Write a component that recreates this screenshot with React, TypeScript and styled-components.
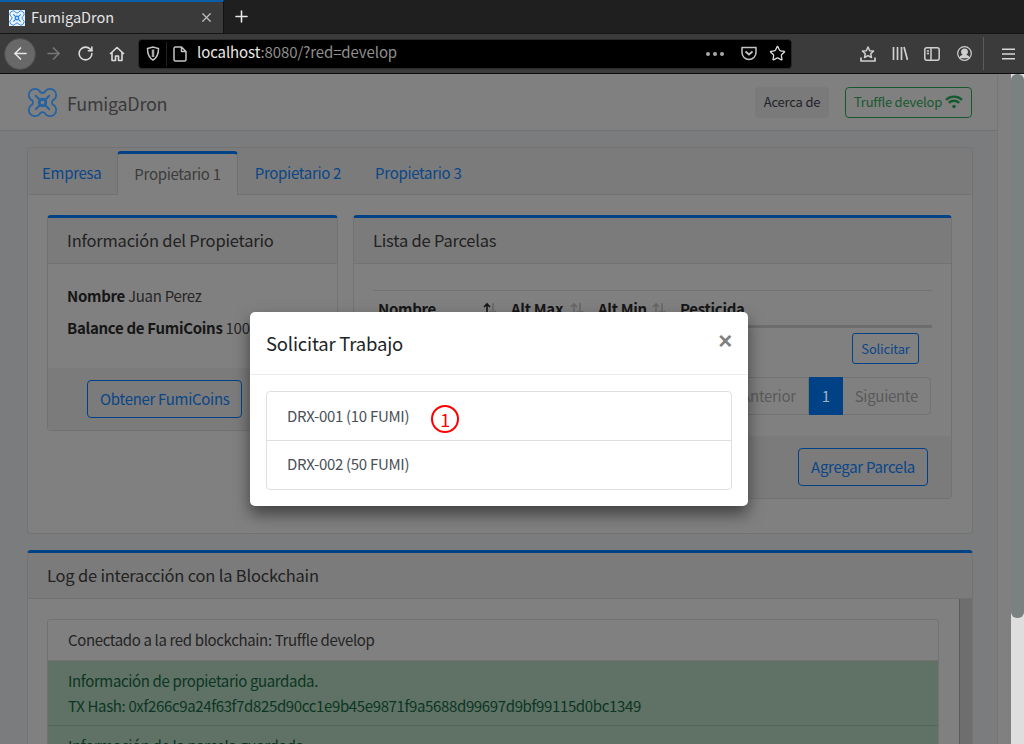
import styled, { createGlobalStyle } from "styled-components";
import { ArrowLeft, ArrowRight, RotateCw, X, Plus, Star } from "lucide-react";

// colours are written as they look under the modal backdrop
const BLUE = "#004285";
const LINK = "#0a4688";
const LINE = "#727272";
const CARD = "#808080";
const TINT = "#7b7b7b";
const GREEN = "#17592f";

const GlobalStyle = createGlobalStyle`
  html, body { margin: 0; padding: 0; height: 100%; overflow: hidden; }
  * { box-sizing: border-box; }
  body {
    font-family: "Noto Sans CJK SC", "Noto Sans", sans-serif;
    font-size: 15px;
    letter-spacing: -0.3px;
    line-height: 24px;
  }
`;

const DroneLogo = ({ size, color }: { size: number; color: string }) => (
  <svg width={size} height={size} viewBox="0 0 30 30" fill="none" stroke={color} strokeWidth="1.700">
    <path d="M12.500 12.500 8 8M17.500 12.500 22 8M12.500 17.500 8 22M17.500 17.500 22 22" strokeWidth="2" />
    <path d="M12 3.500A6 6 0 1 0 3.500 12C6.500 13 6.500 17 3.500 18A6 6 0 1 0 12 26.500C13 23.500 17 23.500 18 26.500A6 6 0 1 0 26.500 18C23.500 17 23.500 13 26.500 12A6 6 0 1 0 18 3.500C17 6.500 13 6.500 12 3.500Z" />
    <circle cx="15" cy="15" r="3.200" strokeWidth="2.800" />
  </svg>
);

const SortIcon = ({ active }: { active?: boolean }) => (
  <svg width="16" height="14" viewBox="0 0 16 14" fill="none" strokeWidth="1.600">
    <path d="M5 13V2M2 5l3-3 3 3" stroke={active ? "#151515" : "#666"} />
    <path d="M11 1v11M8 9l3 3 3-3" stroke="#666" />
  </svg>
);

const App = () => (
  <>
    <GlobalStyle />
    <Screen>
      <TabStrip>
        <BrowserTab>
          <Favicon>
            <DroneLogo size={16} color="#2a86e6" />
          </Favicon>
          <TabTitle>FumigaDron</TabTitle>
          <X size={15} color="#bdbdbd" strokeWidth={2} />
        </BrowserTab>
        <NewTab>
          <Plus size={19} color="#e6e6e6" strokeWidth={2} />
        </NewTab>
      </TabStrip>

      <Toolbar>
        <BackButton>
          <ArrowLeft size={19} color="#e8e8e8" strokeWidth={2} />
        </BackButton>
        <ToolButton>
          <ArrowRight size={19} color="#777" strokeWidth={2} />
        </ToolButton>
        <ToolButton>
          <RotateCw size={17} color="#dcdcdc" strokeWidth={2.200} />
        </ToolButton>
        <ToolButton>
          <svg width="16" height="16" viewBox="0 0 16 16" fill="none" stroke="#dcdcdc" strokeWidth="1.600">
            <path d="M1 8 8 1.500 15 8M3 6.500V14.500H6.500V10H9.500V14.500H13V6.500" strokeLinejoin="round" />
          </svg>
        </ToolButton>
        <UrlBar>
          <UrlIcon>
            <svg width="14" height="15" viewBox="0 0 14 15" fill="none" stroke="#c4c4c4" strokeWidth="1.500">
              <path d="M1.500 2.500 7 1l5.500 1.500c0 5-1 9-5.500 11.500C2.500 11.500 1.500 7.500 1.500 2.500Z" />
              <path d="M7 3.500V11" strokeWidth="2.500" stroke="#a8a8a8" />
            </svg>
          </UrlIcon>
          <UrlDivider />
          <UrlIcon>
            <svg width="14" height="16" viewBox="0 0 14 16" fill="none" stroke="#c4c4c4" strokeWidth="1.500">
              <path d="M1 2.500A1.500 1.500 0 0 1 2.500 1H8.500L13 5.500V13.500A1.500 1.500 0 0 1 11.500 15H2.500A1.500 1.500 0 0 1 1 13.500ZM8.500 1V5.500H13" strokeLinejoin="round" />
            </svg>
          </UrlIcon>
          <UrlText>
            <strong>localhost</strong>:8080/?red=develop
          </UrlText>
          <UrlActions>
            <UrlDots>
              <i />
              <i />
              <i />
            </UrlDots>
            <UrlAction>
              <svg width="16" height="15" viewBox="0 0 16 15" fill="none" stroke="#c4c4c4" strokeWidth="1.500">
                <path d="M1 1.500H15V6.500A7 7 0 0 1 1 6.500Z" strokeLinejoin="round" />
                <path d="M4.500 5.500 8 8.500 11.500 5.500" strokeWidth="1.800" />
              </svg>
            </UrlAction>
            <UrlAction>
              <Star size={17} color="#dcdcdc" strokeWidth={1.800} />
            </UrlAction>
          </UrlActions>
        </UrlBar>
        <RightIcons>
          <ToolButton>
            <svg width="16" height="16" viewBox="0 0 16 16" fill="none" stroke="#d0d0d0" strokeWidth="1.500">
              <path d="M8 1 9.700 4.700 13.500 5.100 10.700 7.700 11.500 11.500 8 9.600 4.500 11.500 5.300 7.700 2.500 5.100 6.300 4.700Z" strokeLinejoin="round" />
              <path d="M1 11.500V15H15V11.500" strokeWidth="1.700" />
            </svg>
          </ToolButton>
          <ToolButton>
            <svg width="16" height="15" viewBox="0 0 16 15" fill="none" stroke="#d0d0d0" strokeWidth="1.700">
              <path d="M1.500 1V14M5.500 1V14M9.500 1V14M12 1 15.500 14" />
            </svg>
          </ToolButton>
          <ToolButton>
            <svg width="16" height="14" viewBox="0 0 16 14" fill="none" stroke="#d0d0d0" strokeWidth="1.500">
              <rect x="0.800" y="0.800" width="14.400" height="12.400" rx="2" />
              <path d="M7 1V13M2.800 4H5M2.800 6.500H5" />
            </svg>
          </ToolButton>
          <ToolButton>
            <svg width="15" height="15" viewBox="0 0 15 15" fill="none" stroke="#d0d0d0" strokeWidth="1.200">
              <circle cx="7.500" cy="7.500" r="6.800" />
              <circle cx="7.500" cy="5.800" r="2.800" fill="#d0d0d0" />
              <path d="M2.800 12.200C3.500 9.800 5.500 9.300 7.500 9.300S11.500 9.800 12.200 12.200" fill="#d0d0d0" />
            </svg>
          </ToolButton>
          <ToolbarDivider />
          <ToolButton>
            <svg width="13" height="12" viewBox="0 0 13 12" stroke="#d8d8d8" strokeWidth="1.500">
              <path d="M0 1.200H13M0 6H13M0 10.800H13" />
            </svg>
          </ToolButton>
        </RightIcons>
      </Toolbar>

      <Content>
        <Viewport>
          <Page>
            <Navbar>
              <Brand>
                <DroneLogo size={31} color="#25629f" />
                <BrandName>FumigaDron</BrandName>
              </Brand>
              <NavActions>
                <AboutButton>Acerca de</AboutButton>
                <NetworkButton>
                  Truffle develop
                  <svg width="18" height="14" viewBox="0 0 18 14" fill="none" stroke={GREEN} strokeWidth="2.400">
                    <path d="M1 4.800C5.500.6 12.500.6 17 4.800M3.800 7.800C6.800 5 11.200 5 14.200 7.800" />
                    <circle cx="9" cy="11.500" r="1.700" fill={GREEN} stroke="none" />
                  </svg>
                </NetworkButton>
              </NavActions>
            </Navbar>

            <Container>
              <Card>
                <Tabs>
                  <TabLink>Empresa</TabLink>
                  <TabLink $active>Propietario 1</TabLink>
                  <TabLink>Propietario 2</TabLink>
                  <TabLink>Propietario 3</TabLink>
                </Tabs>
                <TabPane>
                  <OwnerCol>
                    <AccentCard>
                      <CardHeader>Información del Propietario</CardHeader>
                      <OwnerBody>
                        <Field>
                          <b>Nombre</b> Juan Perez
                        </Field>
                        <Field>
                          <b>Balance de FumiCoins</b> 100
                        </Field>
                      </OwnerBody>
                      <OwnerFooter>
                        <OutlineButton>Obtener FumiCoins</OutlineButton>
                      </OwnerFooter>
                    </AccentCard>
                  </OwnerCol>
                  <ParcelCol>
                    <AccentCard>
                      <CardHeader>Lista de Parcelas</CardHeader>
                      <ParcelBody>
                        <Table>
                          <thead>
                            <tr>
                              <Th $width={133}>
                                Nombre
                                <SortMark>
                                  <SortIcon active />
                                </SortMark>
                              </Th>
                              <Th $width={87}>
                                Alt Max
                                <SortMark>
                                  <SortIcon />
                                </SortMark>
                              </Th>
                              <Th $width={82}>
                                Alt Min
                                <SortMark>
                                  <SortIcon />
                                </SortMark>
                              </Th>
                              <Th>Pesticida</Th>
                            </tr>
                          </thead>
                          <tbody>
                            <tr>
                              <Td colSpan={4}>
                                <SmallButton>Solicitar</SmallButton>
                              </Td>
                            </tr>
                          </tbody>
                        </Table>
                        <Pagination>
                          <PageItem>Anterior</PageItem>
                          <PageItem $active>1</PageItem>
                          <PageItem>Siguiente</PageItem>
                        </Pagination>
                      </ParcelBody>
                      <ParcelFooter>
                        <OutlineButton>Agregar Parcela</OutlineButton>
                      </ParcelFooter>
                    </AccentCard>
                  </ParcelCol>
                </TabPane>
              </Card>

              <LogCard>
                <CardHeader>Log de interacción con la Blockchain</CardHeader>
                <LogBody>
                  <LogScroll>
                    <LogList>
                      <LogItem>Conectado a la red blockchain: Truffle develop</LogItem>
                      <LogItem $success>
                        Información de propietario guardada.
                        <br />
                        TX Hash: 0xf266c9a24f63f7d825d90cc1e9b45e9871f9a5688d99697d9bf99115d0bc1349
                      </LogItem>
                      <LogItem $success>Información de la parcela guardada.</LogItem>
                    </LogList>
                  </LogScroll>
                  <InnerScrollbar />
                </LogBody>
              </LogCard>
            </Container>
          </Page>
          <Gutter />

          <Modal>
            <ModalHeader>
              <ModalTitle>Solicitar Trabajo</ModalTitle>
              <CloseButton>×</CloseButton>
            </ModalHeader>
            <ModalBody>
              <DroneList>
                <DroneItem>
                  DRX-001 (10 FUMI)
                  <StepBadge>1</StepBadge>
                </DroneItem>
                <DroneItem>DRX-002 (50 FUMI)</DroneItem>
              </DroneList>
            </ModalBody>
          </Modal>
        </Viewport>
        <Scrollbar>
          <Thumb />
        </Scrollbar>
      </Content>
    </Screen>
  </>
);

export default App;

const Screen = styled.div`
  width: 1024px;
  height: 744px;
  display: flex;
  flex-direction: column;
  overflow: hidden;
`;

const TabStrip = styled.div`
  height: 33px;
  background: #1f1f1f;
  display: flex;
  flex-shrink: 0;
`;

const BrowserTab = styled.div`
  width: 224px;
  height: 33px;
  background: #3a3a3a;
  border-top: 2px solid #0a5da8;
  border-right: 1px solid #111;
  display: flex;
  align-items: center;
  padding: 0 9px;
  color: #e4e4e4;
`;

const Favicon = styled.div`
  width: 16px;
  height: 16px;
  background: #eaf4ff;
  display: flex;
`;

const TabTitle = styled.span`
  flex: 1;
  margin-left: 6px;
  padding-bottom: 2px;
  font-size: 14.5px;
  letter-spacing: 0;
`;

const NewTab = styled.div`
  width: 34px;
  display: flex;
  align-items: center;
  justify-content: center;
`;

const Toolbar = styled.div`
  height: 41px;
  flex-shrink: 0;
  background: #3b3b3b;
  border-top: 1px solid #151515;
  border-bottom: 1px solid #0c0c0c;
  display: flex;
  align-items: center;
  padding-left: 4px;
`;

const BackButton = styled.div`
  width: 32px;
  height: 32px;
  margin-right: 1px;
  border-radius: 50%;
  background: #686868;
  border: 1px solid #4c4c4c;
  display: flex;
  align-items: center;
  justify-content: center;
`;

const ToolButton = styled.div`
  width: 32px;
  height: 32px;
  flex-shrink: 0;
  display: flex;
  align-items: center;
  justify-content: center;
`;

const UrlBar = styled.div`
  width: 654px;
  height: 30px;
  margin-left: 5px;
  background: #000;
  border: 1px solid #2a2a2a;
  border-radius: 4px;
  display: flex;
  align-items: center;
  padding-left: 6px;
`;

const UrlIcon = styled.div`
  width: 16px;
  display: flex;
  justify-content: center;
`;

const UrlDivider = styled.div`
  width: 1px;
  height: 24px;
  margin: 0 5px 0 5px;
  background: #222;
`;

const UrlText = styled.div`
  margin-left: 9px;
  padding-bottom: 3px;
  font-size: 15px;
  letter-spacing: -0.1px;
  color: #8f8f8f;
  strong {
    color: #e8e8e8;
    font-weight: 400;
  }
`;

const UrlActions = styled.div`
  margin-left: auto;
  display: flex;
  align-items: center;
`;

const UrlDots = styled.div`
  display: flex;
  gap: 3px;
  margin-right: 11px;
  i {
    width: 4px;
    height: 4px;
    border-radius: 50%;
    background: #a8a8a8;
  }
`;

const UrlAction = styled.div`
  width: 28px;
  display: flex;
  justify-content: center;
`;

const RightIcons = styled.div`
  margin-left: 60px;
  display: flex;
  align-items: center;
`;

const ToolbarDivider = styled.div`
  width: 1px;
  height: 33px;
  margin: 0 8px 0 3px;
  background: #5c5c5c;
`;

const Content = styled.div`
  flex: 1;
  min-height: 0;
  display: flex;
`;

const Viewport = styled.div`
  flex: 1;
  position: relative;
  display: flex;
  overflow: hidden;
  background: ${CARD};
`;

const Page = styled.div`
  width: 998px;
  flex-shrink: 0;
  background: #7b7c7e;
  border-right: 1px solid #767676;
`;

const Gutter = styled.div`
  flex: 1;
  background: ${CARD};
`;

const Scrollbar = styled.div`
  width: 13px;
  background: #dedede;
`;

const Thumb = styled.div`
  height: 544px;
  background: #7b8081;
  border-radius: 6px;
`;

const Navbar = styled.nav`
  height: 57px;
  background: ${CARD};
  border-bottom: 1px solid ${LINE};
  padding: 0 25px 0 27px;
  display: flex;
  align-items: center;
  justify-content: space-between;
`;

const Brand = styled.div`
  display: flex;
  align-items: center;
  gap: 9px;
`;

const BrandName = styled.span`
  padding-top: 1px;
  font-size: 18px;
  color: #3a3a3a;
`;

const NavActions = styled.div`
  display: flex;
  gap: 16px;
`;

const AboutButton = styled.div`
  width: 74px;
  height: 31px;
  background: #7a7a7a;
  border-radius: 4px;
  font-size: 13px;
  letter-spacing: -0.2px;
  color: #1e2329;
  display: flex;
  align-items: center;
  justify-content: center;
`;

const NetworkButton = styled.div`
  width: 127px;
  height: 31px;
  border: 1px solid ${GREEN};
  border-radius: 4px;
  font-size: 13px;
  letter-spacing: -0.2px;
  color: ${GREEN};
  display: flex;
  align-items: center;
  justify-content: center;
  gap: 3px;
`;

const Container = styled.div`
  padding: 16px 24px 0 27px;
`;

const Card = styled.section`
  background: ${CARD};
  border: 1px solid ${LINE};
  border-radius: 4px;
  height: 387px;
`;

const Tabs = styled.div`
  height: 47px;
  background: ${TINT};
  border-bottom: 1px solid ${LINE};
  border-radius: 4px 4px 0 0;
  display: flex;
  align-items: flex-end;
`;

const TabLink = styled.a<{ $active?: boolean }>`
  height: ${({ $active }) => ($active ? "44px" : "43px")};
  padding: ${({ $active }) => ($active ? "0 16px 2px" : "0 16px")};
  margin-bottom: ${({ $active }) => ($active ? "-1px" : "0")};
  display: flex;
  align-items: center;
  color: ${({ $active }) => ($active ? "#3c3c3c" : LINK)};
  background: ${({ $active }) => ($active ? CARD : "transparent")};
  border-left: 1px solid ${({ $active }) => ($active ? LINE : "transparent")};
  border-right: 1px solid ${({ $active }) => ($active ? LINE : "transparent")};
  border-top: ${({ $active }) => ($active ? `3px solid ${BLUE}` : "none")};
  border-radius: 4px 4px 0 0;
  &:first-child {
    margin-left: -1px;
    padding: 0 15px 0 14px;
  }
`;

const TabPane = styled.div`
  display: flex;
  gap: 15px;
  padding: 20px 20px 0 19px;
`;

const OwnerCol = styled.div`
  width: 291px;
  flex-shrink: 0;
`;

const ParcelCol = styled.div`
  flex: 1;
`;

const AccentCard = styled.div`
  background: ${CARD};
  border: 1px solid ${LINE};
  border-top: 3px solid ${BLUE};
  border-radius: 4px;
`;

const CardHeader = styled.h2`
  margin: 0;
  height: 46px;
  padding: 0 19px;
  font-size: 16.5px;
  letter-spacing: -0.2px;
  font-weight: 400;
  color: #222;
  line-height: 45px;
  border-bottom: 1px solid ${LINE};
  background: ${TINT};
`;

const OwnerBody = styled.div`
  height: 104px;
  padding: 20px 19px 0;
  color: #262626;
`;

const Field = styled.p`
  margin: 0 0 8px;
  white-space: nowrap;
  b {
    font-weight: 700;
    color: #161616;
  }
`;

const OwnerFooter = styled.div`
  height: 62px;
  background: ${TINT};
  padding: 12px 39px;
`;

const OutlineButton = styled.button`
  height: 38px;
  padding: 0 12px;
  font: inherit;
  letter-spacing: inherit;
  color: ${LINK};
  background: transparent;
  border: 1px solid ${BLUE};
  border-radius: 4px;
`;

const ParcelBody = styled.div`
  height: 172px;
  padding: 26px 19px 0;
`;

const Table = styled.table`
  width: 100%;
  border-collapse: collapse;
  table-layout: fixed;
  border-top: 1px solid ${LINE};
`;

const Th = styled.th<{ $width?: number }>`
  position: relative;
  width: ${({ $width }) => ($width ? `${$width}px` : "auto")};
  padding: 6px 5px 4px;
  text-align: left;
  font-weight: 700;
  color: #161616;
  border-bottom: 3px solid #6d6d6d;
`;

const SortMark = styled.span`
  position: absolute;
  right: 8px;
  top: 11px;
  display: flex;
`;

const Td = styled.td`
  padding: 5px 13px 7px 5px;
  text-align: right;
`;

const SmallButton = styled.button`
  height: 31px;
  width: 67px;
  padding: 0;
  font: inherit;
  font-size: 13px;
  letter-spacing: -0.2px;
  color: ${LINK};
  background: transparent;
  border: 1px solid ${BLUE};
  border-radius: 3px;
  display: inline-block;
  vertical-align: top;
`;

const Pagination = styled.div`
  display: flex;
  justify-content: flex-end;
  margin-top: 6px;
  padding-right: 1px;
`;

const PageItem = styled.span<{ $active?: boolean }>`
  padding: 6px 12px;
  height: 38px;
  color: ${({ $active }) => ($active ? "#9fb3c6" : "#5a5a5a")};
  background: ${({ $active }) => ($active ? BLUE : "transparent")};
  border: 1px solid ${({ $active }) => ($active ? BLUE : LINE)};
  border-left-width: ${({ $active }) => ($active ? "1px" : "0")};
  &:first-child {
    border-left-width: 1px;
    border-radius: 4px 0 0 4px;
  }
  &:last-child {
    border-radius: 0 4px 4px 0;
  }
`;

const ParcelFooter = styled.div`
  height: 62px;
  background: ${TINT};
  padding: 12px 23px;
  display: flex;
  justify-content: flex-end;
`;

const LogCard = styled.section`
  margin-top: 16px;
  background: ${CARD};
  border: 1px solid ${LINE};
  border-top: 3px solid ${BLUE};
  border-radius: 4px;
`;

const LogBody = styled.div`
  display: flex;
`;

const LogScroll = styled.div`
  flex: 1;
  padding: 20px 20px 0 19px;
`;

const InnerScrollbar = styled.div`
  width: 13px;
  background: #6e6e6e;
  border-left: 1px solid #5c5c5c;
`;

const LogList = styled.div`
  border: 1px solid ${LINE};
  border-bottom: none;
  border-radius: 4px 4px 0 0;
  overflow: hidden;
  letter-spacing: -0.36px;
`;

const LogItem = styled.div<{ $success?: boolean }>`
  padding: 7px 20px ${({ $success }) => ($success ? "7px" : "8px")};
  line-height: 25px;
  color: ${({ $success }) => ($success ? "#0d3524" : "#242424")};
  background: ${({ $success }) => ($success ? "#5f7265" : CARD)};
  border-bottom: 1px solid ${({ $success }) => ($success ? "#53675a" : LINE)};
  white-space: nowrap;
`;

const Modal = styled.div`
  position: absolute;
  left: 250px;
  top: 238px;
  width: 498px;
  height: 194px;
  background: #fff;
  border-radius: 5px;
  box-shadow: 0 8px 16px rgba(0, 0, 0, 0.5);
`;

const ModalHeader = styled.div`
  height: 63px;
  padding: 0 16px;
  border-bottom: 1px solid #e9ecef;
  display: flex;
  align-items: center;
  justify-content: space-between;
`;

const ModalTitle = styled.h3`
  margin: 0;
  font-size: 18.5px;
  letter-spacing: -0.2px;
  font-weight: 400;
  color: #212529;
`;

const CloseButton = styled.span`
  font-family: "Liberation Sans", sans-serif;
  font-size: 24px;
  font-weight: 700;
  color: #808080;
  margin-top: -5px;
`;

const ModalBody = styled.div`
  padding: 16px;
`;

const DroneList = styled.div`
  border: 1px solid #dfdfdf;
  border-radius: 4px;
`;

const DroneItem = styled.div`
  position: relative;
  height: 48px;
  padding: 0 20px;
  line-height: 47px;
  color: #495057;
  & + & {
    height: 49px;
    line-height: 46px;
    border-top: 1px solid #dfdfdf;
  }
`;

const StepBadge = styled.span`
  position: absolute;
  left: 164px;
  top: 13px;
  width: 28px;
  height: 28px;
  border: 2px solid #f00;
  border-radius: 50%;
  color: #f00;
  font-size: 18px;
  line-height: 24px;
  text-align: center;
`;
